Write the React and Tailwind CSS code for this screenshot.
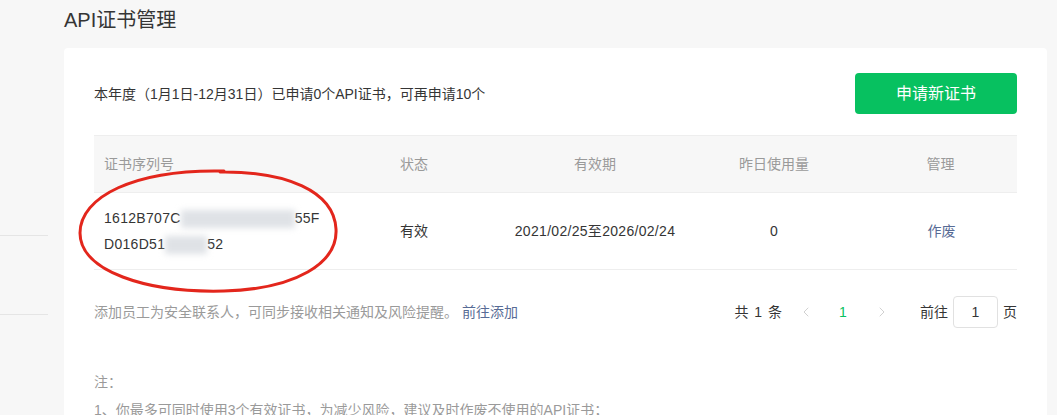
import { ChevronLeft, ChevronRight } from "lucide-react";

const font = { fontFamily: '"Liberation Sans", "Noto Sans CJK SC", sans-serif' };

const Blur = ({ w }) => (
  <span className={`inline-block h-[18px] align-middle bg-gray-300/70 blur-[3px] ${w}`} />
);

export default function App() {
  return (
    <div className="w-[1057px] h-[415px] overflow-hidden bg-[#f7f7f7] flex text-[#353535]" style={font}>
      <div className="w-[48px] shrink-0">
        <div className="h-[236px] border-b border-[#e5e5e5]" />
        <div className="h-[79px] border-b border-[#e5e5e5]" />
      </div>
      <div className="ml-[16px] w-[983px] shrink-0">
        <h1 className="pt-[6px] h-[48px] text-[20px] leading-[28px] font-normal">API证书管理</h1>
        <div className="bg-white rounded-[4px] px-[30px] pt-[25px] h-[400px]">
          <div className="flex items-center justify-between h-[41px]">
            <p className="text-[14px] mt-[2px]">本年度（1月1日-12月31日）已申请0个API证书，可再申请10个</p>
            <button className="w-[162px] h-[41px] rounded-[4px] bg-[#07c160] text-white text-[16px]">申请新证书</button>
          </div>

          <div className="relative mt-[21px] text-[14px]">
            <div className="grid grid-cols-[296px_110px_190px_168px_1fr] h-[57px] items-center bg-[#f7f7f7] border-t border-[#eeeeee] text-[#9a9a9a]">
              <span className="pl-[10px]">证书序列号</span>
              <span className="pl-[10px]">状态</span>
              <span className="text-center">有效期</span>
              <span className="text-center">昨日使用量</span>
              <span className="text-center pl-[6px]">管理</span>
            </div>
            <div className="grid grid-cols-[296px_110px_190px_168px_1fr] h-[78px] items-center border-t border-b border-[#eeeeee]">
              <div className="pl-[10px] leading-[26px] tracking-[0.3px]">
                <div>1612B707C<Blur w="w-[114px]" />55F</div>
                <div>D016D51<Blur w="w-[42px]" />52</div>
              </div>
              <span className="pl-[10px]">有效</span>
              <span className="text-center tracking-[0.3px]">2021/02/25至2026/02/24</span>
              <span className="text-center">0</span>
              <span className="text-center pl-[8px] text-[#576b95]">作废</span>
            </div>
            <svg className="absolute left-[-20px] top-[32px] pointer-events-none" width="270" height="130" viewBox="0 0 270 130">
              <path
                d="M150 4 C 60 2, 6 30, 6 66 C 6 104, 72 126, 150 124 C 222 122, 264 96, 262 62 C 260 24, 212 4, 146 5"
                fill="none"
                stroke="#e3261c"
                strokeWidth="3"
                strokeLinecap="round"
              />
            </svg>
          </div>

          <div className="flex items-center justify-between h-[84px] text-[14px]">
            <p className="text-[#9a9a9a]">
              添加员工为安全联系人，可同步接收相关通知及风险提醒。
              <a className="ml-[4px] text-[#576b95]">前往添加</a>
            </p>
            <div className="flex items-center">
              <span className="tracking-[1px]">共 1 条</span>
              <span className="ml-[5px] w-[36px] flex justify-center text-[#c8c8c8]">
                <ChevronLeft size={16} strokeWidth={1.25} />
              </span>
              <span className="w-[38px] text-center text-[#07c160]">1</span>
              <span className="w-[40px] flex justify-center text-[#c8c8c8]">
                <ChevronRight size={16} strokeWidth={1.25} />
              </span>
              <span className="ml-[18px]">前往</span>
              <span className="ml-[5px] w-[45px] h-[32px] flex items-center justify-center border border-[#e1e1e1] rounded-[4px]">1</span>
              <span className="ml-[5px]">页</span>
            </div>
          </div>

          <div className="mt-[14px] text-[14px] text-[#9a9a9a] leading-[28px]">
            <p>注：</p>
            <p>1、你最多可同时使用3个有效证书，为减少风险，建议及时作废不使用的API证书；</p>
          </div>
        </div>
      </div>
    </div>
  );
}
